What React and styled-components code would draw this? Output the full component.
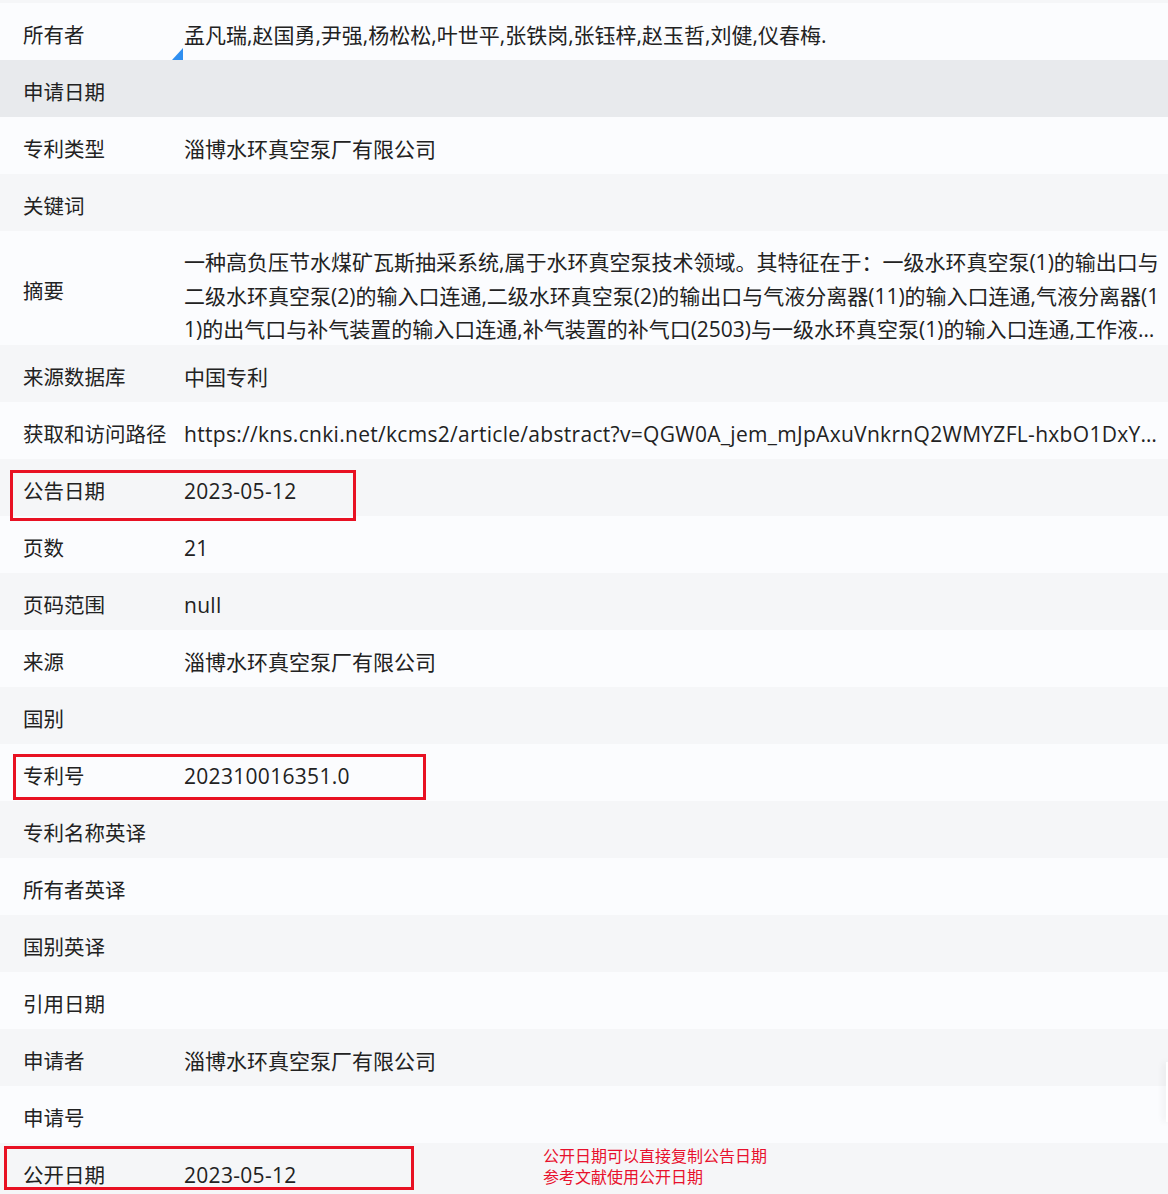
import React from 'react';
import styled, { createGlobalStyle } from 'styled-components';

const GlobalStyle = createGlobalStyle`
  html, body {
    margin: 0;
    padding: 0;
    background: #fbfcfe;
  }
  body {
    font-family: "Open Sans", "Noto Sans CJK SC", sans-serif;
    color: #222;
    overflow: hidden;
  }
`;

const Page = styled.div`
  padding-top: 3px;
  background: #f5f6f8;
  position: relative;
`;

const Table = styled.div`
  display: flex;
  flex-direction: column;
`;

const Row = styled.div`
  position: relative;
  display: flex;
  align-items: ${({ $tall }) => ($tall ? 'flex-start' : 'center')};
  height: ${({ $tall }) => ($tall ? '114px' : '57px')};
  background: ${({ $hover, $odd }) => ($hover ? '#e8eaed' : $odd ? '#f5f6f8' : '#fbfcfe')};
  font-size: 21px;
  line-height: 28px;
`;

const Label = styled.div`
  flex: 0 0 184px;
  padding-left: 23px;
  box-sizing: border-box;
  white-space: nowrap;
  padding-top: 6px;
  align-self: center;
  font-size: 20.5px;
`;

const Value = styled.div`
  flex: 1;
  min-width: 0;
  padding-right: 8px;
  white-space: nowrap;
  overflow: hidden;
  text-overflow: ellipsis;
  padding-top: 6px;
  letter-spacing: ${({ $latin }) => ($latin ? '0.3px' : '0')};
`;

const Abstract = styled.div`
  flex: 1;
  min-width: 0;
  padding: 15px 6px 0 0;
  line-height: 33.5px;
  font-size: 21px;
  display: -webkit-box;
  -webkit-line-clamp: 3;
  -webkit-box-orient: vertical;
  overflow: hidden;
  word-break: break-all;
`;

const Corner = styled.span`
  position: absolute;
  left: 172px;
  bottom: 0;
  width: 0;
  height: 0;
  border-left: 11px solid transparent;
  border-bottom: 12px solid #2f8ff0;
`;

const Mark = styled.div`
  position: absolute;
  border: 3px solid #e81123;
  box-sizing: border-box;
  pointer-events: none;
  z-index: 2;
`;

const Note = styled.div`
  position: absolute;
  left: 543px;
  top: 2px;
  font-size: 16px;
  line-height: 21px;
  color: #e8112d;
  font-family: "Noto Sans CJK SC", sans-serif;
  z-index: 2;
`;

const SideTab = styled.div`
  position: fixed;
  right: 0;
  top: 1062px;
  width: 2px;
  height: 60px;
  background: #fff;
  box-shadow: -2px 0 6px rgba(0, 0, 0, 0.12);
`;

const abstractText =
  '一种高负压节水煤矿瓦斯抽采系统,属于水环真空泵技术领域。其特征在于：一级水环真空泵(1)的输出口与二级水环真空泵(2)的输入口连通,二级水环真空泵(2)的输出口与气液分离器(11)的输入口连通,气液分离器(11)的出气口与补气装置的输入口连通,补气装置的补气口(2503)与一级水环真空泵(1)的输入口连通,工作液箱的出液口与一级水环真空泵(1)及二级水环真空泵(2)的进液口连通。';

const rows = [
  { label: '所有者', value: '孟凡瑞,赵国勇,尹强,杨松松,叶世平,张铁岗,张钰梓,赵玉哲,刘健,仪春梅.', corner: true },
  { label: '申请日期', value: '', hover: true },
  { label: '专利类型', value: '淄博水环真空泵厂有限公司' },
  { label: '关键词', value: '' },
  { label: '摘要', abstract: true },
  { label: '来源数据库', value: '中国专利' },
  { label: '获取和访问路径', value: 'https://kns.cnki.net/kcms2/article/abstract?v=QGW0A_jem_mJpAxuVnkrnQ2WMYZFL-hxbO1DxYr9kT3oW8m2sZ8kqLJHh0wYhN0pG', latin: true },
  { label: '公告日期', value: '2023-05-12', latin: true, mark: { left: 10, top: 11, width: 346, height: 51 } },
  { label: '页数', value: '21', latin: true },
  { label: '页码范围', value: 'null', latin: true },
  { label: '来源', value: '淄博水环真空泵厂有限公司' },
  { label: '国别', value: '' },
  { label: '专利号', value: '202310016351.0', latin: true, mark: { left: 13, top: 10, width: 413, height: 46 } },
  { label: '专利名称英译', value: '' },
  { label: '所有者英译', value: '' },
  { label: '国别英译', value: '' },
  { label: '引用日期', value: '' },
  { label: '申请者', value: '淄博水环真空泵厂有限公司' },
  { label: '申请号', value: '' },
  { label: '公开日期', value: '2023-05-12', latin: true, mark: { left: 4, top: 3, width: 410, height: 44 }, note: true },
];

export default function App() {
  return (
    <>
      <GlobalStyle />
      <Page>
        <Table>
          {rows.map((r, i) => (
            <Row key={r.label} $odd={i % 2 === 1} $hover={r.hover} $tall={r.abstract}>
              <Label>{r.label}</Label>
              {r.abstract ? (
                <Abstract>{abstractText}</Abstract>
              ) : (
                <Value $latin={r.latin}>{r.value}</Value>
              )}
              {r.corner && <Corner />}
              {r.mark && (
                <Mark
                  style={{ left: r.mark.left, top: r.mark.top, width: r.mark.width, height: r.mark.height }}
                />
              )}
              {r.note && (
                <Note>
                  公开日期可以直接复制公告日期
                  <br />
                  参考文献使用公开日期
                </Note>
              )}
            </Row>
          ))}
        </Table>
        <SideTab />
      </Page>
    </>
  );
}
